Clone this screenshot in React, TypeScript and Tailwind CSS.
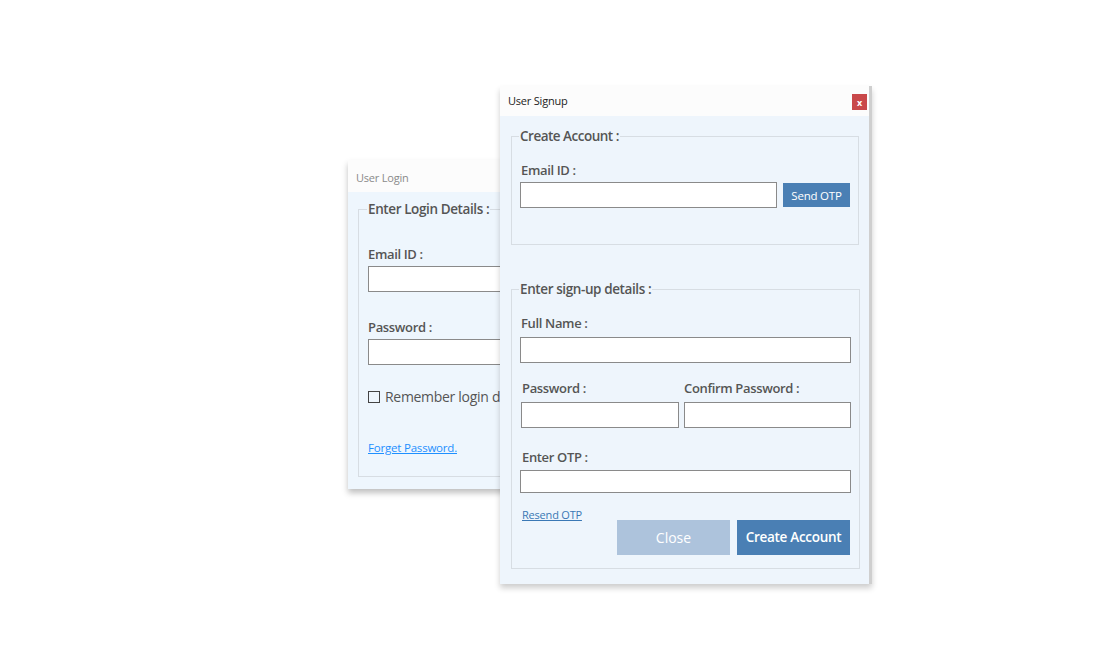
const font = { fontFamily: '"Open Sans", "Noto Sans", sans-serif' }

const Label = ({ children, className = '' }: { children: React.ReactNode; className?: string }) => (
    <div className={`text-[13px] font-semibold leading-[18px] tracking-[-0.35px] text-[#555] ${className}`}>{children}</div>
)

const Input = ({ className = '', h = 'h-[26px]' }: { className?: string; h?: string }) => (
    <input type="text" className={`block border border-[#8a8a8a] bg-white outline-none ${h} ${className}`} />
)

function LoginWindow() {
    return (
        <div className="absolute left-[348px] top-[160px] flex h-[329px] w-[320px] flex-col bg-[#eef6fd] shadow-[0_4px_6px_rgba(0,0,0,0.25)]">
            <div className="flex h-[32px] items-center bg-[#fcfcfc] pl-[8px] pt-[4px] text-[11px] tracking-[-0.2px] text-[#8a8a8a]">User Login</div>
            <div className="flex-1 px-[10px] pb-[12px] pt-[7px]">
                <fieldset className="h-full border border-[#d7dde3] pl-[9px] pr-[9px]">
                    <legend className="ml-[-1px] px-[1px] text-[13.5px] font-semibold tracking-[-0.4px] text-[#555]">Enter Login Details :</legend>
                    <Label className="mt-[26px]">Email ID :</Label>
                    <Input className="mt-[3px] w-[280px]" />
                    <Label className="mt-[26px]">Password :</Label>
                    <Input className="mt-[3px] w-[280px]" />
                    <div className="mt-[21px] flex items-center gap-[5px]">
                        <span className="h-[12px] w-[12px] border border-[#444]"></span>
                        <span className="text-[14px] tracking-[-0.3px] text-[#555]">Remember login details</span>
                    </div>
                    <a href="#" className="mt-[32px] block text-[11.5px] tracking-[-0.2px] text-[#1e90ff] underline">Forget Password.</a>
                </fieldset>
            </div>
        </div>
    )
}

function SignupWindow() {
    return (
        <div className="absolute left-[500px] top-[86px] flex h-[498px] w-[372px] flex-col border-r-[3px] border-[#cfcfcf] bg-[#eef5fc] shadow-[0_4px_6px_rgba(0,0,0,0.2)]">
            <div className="flex h-[30px] items-center justify-between bg-[#fcfcfc] pl-[8px] pr-[2px]">
                <span className="text-[11px] tracking-[-0.2px] text-[#222]">User Signup</span>
                <span className="mt-[2px] flex h-[16px] w-[15px] items-center justify-center bg-[#c9484a] text-[9px] font-bold leading-none text-white">x</span>
            </div>
            <div className="flex flex-1 flex-col px-[11px] pb-[15px] pt-[10px]">
                <fieldset className="h-[119px] border border-[#d7dde3] px-[8px]">
                    <legend className="ml-[-1px] px-[1px] text-[13.5px] font-semibold tracking-[-0.5px] text-[#555]">Create Account :</legend>
                    <Label className="mt-[15px] ml-[1px]">Email ID :</Label>
                    <div className="mt-[3px] flex items-center gap-[6px]">
                        <Input className="w-[257px] border-[#3d8fd6]" />
                        <button className="h-[24px] w-[67px] bg-[#4a7fb4] text-[11.5px] tracking-[-0.2px] text-white">Send OTP</button>
                    </div>
                </fieldset>
                <fieldset className="mt-[34px] flex-1 border border-[#d7dde3] px-[8px]">
                    <legend className="ml-[-1px] px-[1px] text-[13.5px] font-semibold tracking-[-0.4px] text-[#555]">Enter sign-up details :</legend>
                    <Label className="mt-[15px] ml-[1px]">Full Name :</Label>
                    <Input className="mt-[5px] w-[331px]" />
                    <div className="mt-[16px] flex gap-[5px]">
                        <div>
                            <Label className="ml-[2px]">Password :</Label>
                            <Input className="mt-[5px] ml-[1px] w-[158px]" />
                        </div>
                        <div>
                            <Label>Confirm Password :</Label>
                            <Input className="mt-[5px] w-[167px]" />
                        </div>
                    </div>
                    <Label className="mt-[20px] ml-[2px]">Enter OTP :</Label>
                    <Input h="h-[23px]" className="mt-[4px] w-[331px]" />
                    <div className="mt-[14px] flex">
                        <a href="#" className="ml-[2px] text-[11px] tracking-[-0.2px] text-[#3a78b5] underline">Resend OTP</a>
                    </div>
                    <div className="mt-[-4px] flex justify-end gap-[7px] pr-[1px]">
                        <button className="h-[35px] w-[113px] bg-[#adc3dc] text-[14px] text-white">Close</button>
                        <button className="h-[35px] w-[113px] bg-[#4a7fb4] text-[13.5px] font-semibold tracking-[-0.3px] text-white">Create Account</button>
                    </div>
                </fieldset>
            </div>
        </div>
    )
}

export default function App() {
    return (
        <div className="relative h-[659px] w-[1115px] overflow-hidden bg-white" style={font}>
            <LoginWindow />
            <SignupWindow />
        </div>
    )
}
